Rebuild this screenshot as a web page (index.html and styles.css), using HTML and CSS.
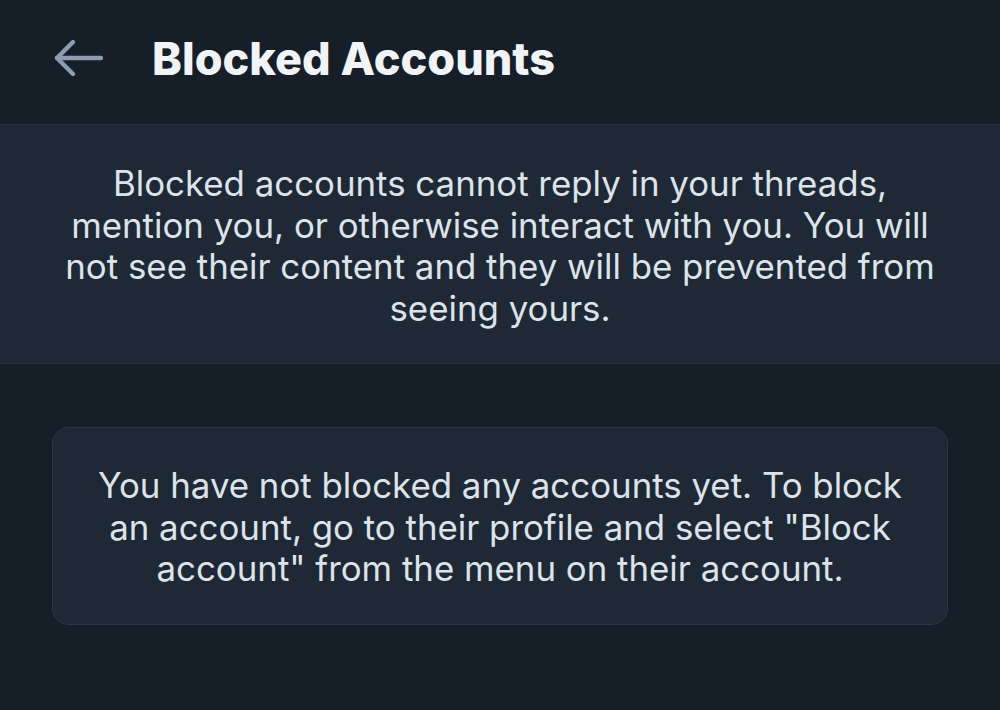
FILE: index.html
```html
<!DOCTYPE html>
<html>
<head>
<meta charset="utf-8">
<link rel="stylesheet" href="styles.css">
</head>
<body>
<div class="screen">
  <header class="header">
    <button class="back" aria-label="Back">
      <svg width="52" height="42" viewBox="0 0 52 42" fill="none" stroke="currentColor" stroke-width="4.4" stroke-linecap="round" stroke-linejoin="round">
        <path d="M48 21H4"/>
        <path d="M20 5L4 21L20 37"/>
      </svg>
    </button>
    <h1 class="title">Blocked Accounts</h1>
  </header>
  <section class="info">
    <p>Blocked accounts cannot reply in your threads, mention you, or otherwise interact with you. You will not see their content and they will be prevented from seeing yours.</p>
  </section>
  <div class="card">
    <p>You have not blocked any accounts yet. To block an account, go to their profile and select "Block account" from the menu on their account.</p>
  </div>
</div>
</body>
</html>
```
FILE: styles.css
```css
* { box-sizing: border-box; }
html, body {
  margin: 0;
  padding: 0;
  background: #161e27;
}
body {
  font-family: Inter, "Noto Sans", sans-serif;
  color: #dce3ea;
  width: 1000px;
  height: 710px;
  overflow: hidden;
}
.screen {
  display: flex;
  flex-direction: column;
}
.header {
  height: 125px;
  display: flex;
  align-items: center;
  border-bottom: 1px solid #2a3542;
  padding-left: 53px;
}
.back {
  background: none;
  border: 0;
  padding: 0;
  color: #8c9db1;
  display: flex;
  margin-top: -8px;
}
.title {
  margin: -8px 0 0 47px;
  font-size: 45px;
  font-weight: 800;
  color: #f1f4f7;
}
.info {
  background: #1e2935;
  border-bottom: 1px solid #2a3542;
  padding: 38px 56px 33px;
  text-align: center;
}
.info p, .card p {
  margin: 0;
  font-size: 34.85px;
  line-height: 41.7px;
  color: #dce3ea;
}
.card {
  margin: 63px 52px 0;
  background: #1e2935;
  border: 1px solid #2c3845;
  border-radius: 17px;
  padding: 37px 30px 34px;
  text-align: center;
}
```
